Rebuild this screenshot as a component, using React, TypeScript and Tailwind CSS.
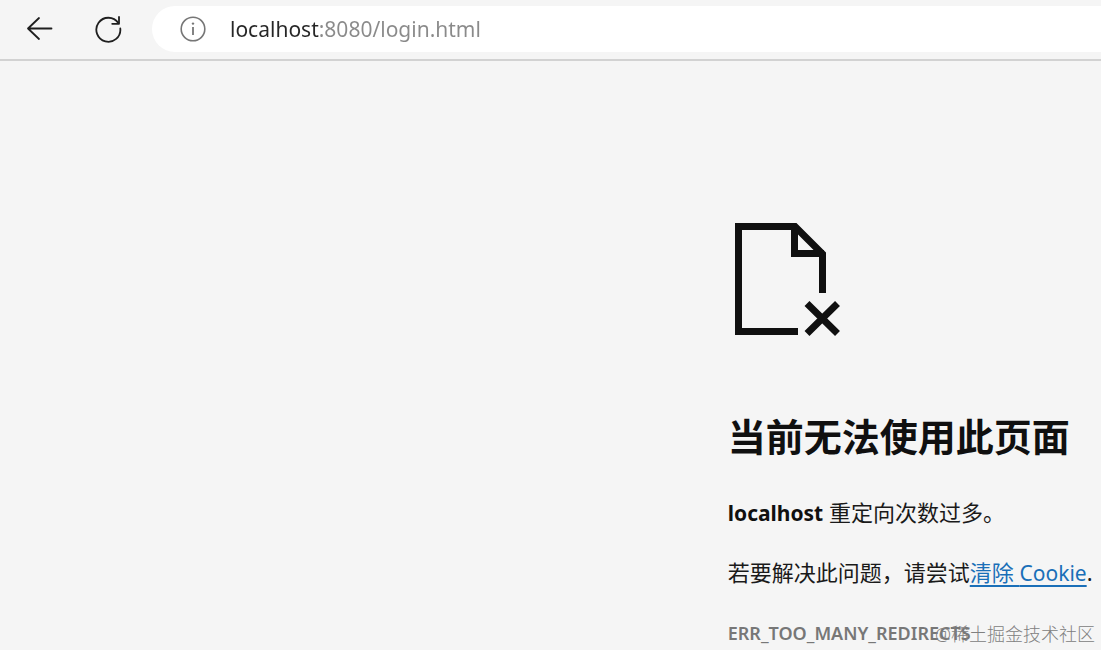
import React, { useState } from 'react';

const BackIcon = () => (
  <svg width="28" height="28" viewBox="0 0 28 28" fill="none" stroke="#1f1f1f" strokeWidth="1.8" strokeLinecap="round" strokeLinejoin="round">
    <path d="M25.500 13.500H2M13 3L2 13.500l11 10.500" />
  </svg>
);

const ReloadIcon = () => (
  <svg width="28" height="28" viewBox="0 0 28 28" fill="none" stroke="#1f1f1f" strokeWidth="1.8" strokeLinecap="round" strokeLinejoin="round">
    <path d="M26.300 13.500A12 12 0 1 1 24.300 8" />
    <path d="M25 2V8.800H18.200" />
  </svg>
);

const InfoIcon = () => (
  <svg width="26" height="26" viewBox="0 0 26 26" fill="none" stroke="#767676" strokeWidth="1.6">
    <circle cx="13" cy="13" r="11.800" />
    <path d="M13 11v8" strokeWidth="1.8" />
    <circle cx="13" cy="7.6" r="1.2" fill="#767676" stroke="none" />
  </svg>
);

const BrokenPageIcon = () => (
  <svg width="106" height="114" viewBox="0 0 106 114" fill="none" stroke="#101010" strokeWidth="7">
    <path d="M64 109.500H4.500V4.500H61L88.500 32V71" />
    <path d="M60.500 4V31.500H90" />
    <path d="M73 81.500L103.500 111.500M103.500 81.500L73 111.500" />
  </svg>
);

const Toolbar = () => {
  const [url, setUrl] = useState('localhost:8080/login.html');

  return (
    <header className="flex items-center border-b-2 border-[#d2d2d2] bg-[#f5f5f5] pt-1.5 pb-[7px] pl-[26px]">
      <button type="button" aria-label="返回" className="mr-10">
        <BackIcon />
      </button>
      <button type="button" aria-label="刷新" className="mr-[30px]">
        <ReloadIcon />
      </button>
      <div className="flex h-[46px] flex-1 items-center rounded-l-full bg-white pl-7">
        <button type="button" aria-label="查看站点信息" className="mr-6">
          <InfoIcon />
        </button>
        {/* the host part is darker than the port and path */}
        <input
          type="text"
          aria-label="地址栏"
          value={url}
          onChange={(e) => setUrl(e.target.value)}
          spellCheck={false}
          className="min-w-0 flex-1 bg-[linear-gradient(to_right,#262626_90px,#8a8a8a_90px)] bg-clip-text text-[21px] leading-8 text-transparent caret-black outline-none"
        />
      </div>
    </header>
  );
};

const App = () => {
  return (
    <div className="relative flex min-h-screen flex-col overflow-hidden bg-[#f5f5f5] font-['Noto_Sans','Noto_Sans_CJK_SC',sans-serif] text-[#1a1a1a]">
      <Toolbar />
      <main className="flex-1 pt-[161px] pl-[66.1%] whitespace-nowrap">
        <div className="pl-1.5">
          <BrokenPageIcon />
        </div>
        <h1 className="mt-[74px] text-[38px] leading-[52px] font-bold text-[#101010]">当前无法使用此页面</h1>
        <p className="mt-[34px] text-[22px] leading-8">
          <strong className="text-[21px] font-bold text-[#101010]">localhost</strong> 重定向次数过多。
        </p>
        <p className="mt-[27px] text-[22px] leading-8">
          若要解决此问题，请尝试
          <a href="#clear-cookies" className="text-[#1a6fb8] underline decoration-2 underline-offset-4">
            清除 <span className="text-[21px]">Cookie</span>
          </a>
          .
        </p>
        <p className="mt-7 text-[18px] leading-8 font-semibold text-[#777777]">ERR_TOO_MANY_REDIRECTS</p>
      </main>
      <span className="absolute right-1.5 bottom-1 text-[18px] leading-6 font-light text-[#808080]">@稀土掘金技术社区</span>
    </div>
  );
};

export default App;
